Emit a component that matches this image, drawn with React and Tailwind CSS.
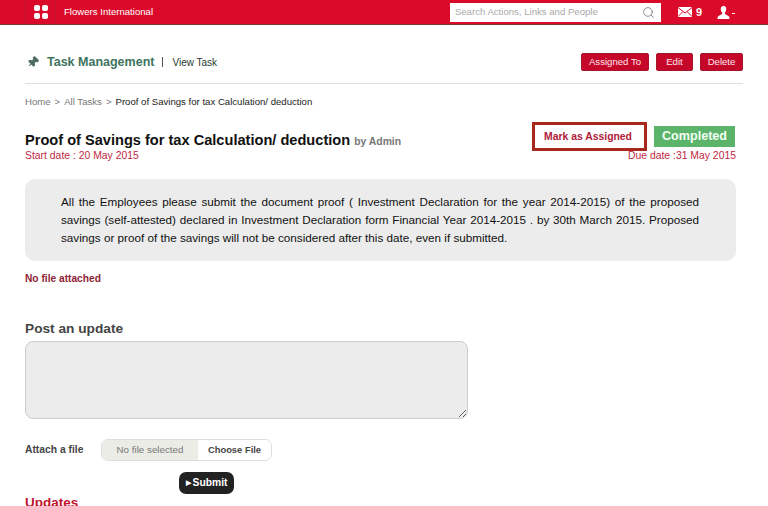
import React from 'react';
import { Pin, Search } from 'lucide-react';

const GridIcon = () => (
    <div className="grid grid-cols-2 gap-[2px]">
        <span className="h-[6px] w-[6px] rounded-[2px] bg-white" />
        <span className="h-[6px] w-[6px] rounded-[2px] bg-white" />
        <span className="h-[6px] w-[6px] rounded-[2px] bg-white" />
        <span className="h-[6px] w-[6px] rounded-[2px] bg-white" />
    </div>
);

const MailIcon = () => (
    <svg width="14" height="10" viewBox="0 0 14 10" aria-hidden>
        <rect width="14" height="10" fill="#fff" />
        <path d="M0 0.5 L7 6 L14 0.5 M0 9.5 L5 4.5 M14 9.5 L9 4.5" stroke="#dc0a2a" strokeWidth="1" fill="none" />
    </svg>
);

const UserIcon = () => (
    <svg width="13" height="13" viewBox="0 0 13 13" aria-hidden>
        <path d="M6.5 0 C8.5 0 9.5 1.5 9.2 3.6 C9 5.2 8.3 6.2 7.8 6.8 L8 8 C9.5 9 12 9.5 12.5 11.5 L12.5 13 L0.5 13 L0.5 11.5 C1 9.5 3.5 9 5 8 L5.2 6.8 C4.7 6.2 4 5.2 3.8 3.6 C3.5 1.5 4.5 0 6.5 0 Z" fill="#fff" />
    </svg>
);

const Header = () => (
    <header className="flex h-[25px] items-center border-b border-[#7a3b2e] bg-[#dc0a2a] pl-[25px] pr-[33px]">
        <div className="flex h-full w-[31px] items-center justify-center border-x border-[#c2182f]">
            <GridIcon />
        </div>
        <span className="ml-2 text-[9.6px] text-white">Flowers International</span>
        <div className="ml-auto flex h-[19px] w-[211px] items-center justify-between bg-white pl-[5px] pr-[6px]">
            <span className="text-[9.6px] text-[#a9a9a9]">Search Actions, Links and People</span>
            <Search size={13} strokeWidth={1.5} className="text-[#777]" />
        </div>
        <div className="ml-[17px] flex items-center gap-[4px]">
            <MailIcon />
            <span className="text-[11px] font-bold text-white">9</span>
        </div>
        <div className="ml-[15px] flex items-center gap-[2px]">
            <UserIcon />
            <span className="mt-[3px] h-px w-[3px] bg-white" />
        </div>
    </header>
);

const ActionButton = ({ label, className }) => (
    <button type="button" className={`h-[18px] rounded-[2px] border border-[#a5142a] bg-[#c5082a] text-[9.6px] leading-none text-[#fde4ea] ${className}`}>
        {label}
    </button>
);

const TitleBar = () => (
    <div className="mt-[28px] flex h-[31px] items-start justify-between border-b border-[#dedede]">
        <div className="flex h-[18px] items-center">
            <Pin size={12} strokeWidth={2} className="ml-[2px] rotate-45 fill-current text-[#4f6b60]" />
            <span className="ml-[8px] text-[12.5px] font-bold text-[#3e7460]">Task Management</span>
            <span className="ml-[8px] h-[10px] w-px bg-[#555]" />
            <span className="ml-[9px] text-[10px] text-[#1f3a30]">View Task</span>
        </div>
        <div className="flex gap-[7px]">
            <ActionButton label="Assigned To" className="w-[68px]" />
            <ActionButton label="Edit" className="w-[37px]" />
            <ActionButton label="Delete" className="w-[43px]" />
        </div>
    </div>
);

const TaskHead = () => (
    <div className="mr-[7px] mt-[14px] flex items-start justify-between">
        <div className="pt-[9px]">
            <div className="flex items-baseline">
                <h1 className="text-[14.6px] font-bold leading-[19px] text-[#111]">Proof of Savings for tax Calculation/ deduction</h1>
                <span className="ml-[4px] text-[10.4px] font-bold text-[#777]">by Admin</span>
            </div>
            <p className="text-[10.4px] leading-[11px] text-[#c0283f]">Start date : 20 May 2015</p>
        </div>
        <div className="flex flex-col items-end">
            <div className="flex items-center gap-[7px] pr-px">
                <button type="button" className="h-[29px] w-[115px] border-[3px] border-[#a8281e] bg-white pr-[3px] text-[10.4px] font-bold text-[#b0213a]">
                    Mark as Assigned
                </button>
                <span className="flex h-[21px] w-[81px] items-center justify-center bg-[#5cb36a] text-[12.6px] font-bold text-[#f2fff4]">
                    Completed
                </span>
            </div>
            <p className="-mt-px text-[10.4px] leading-[11px] text-[#c0283f]">Due date :31 May 2015</p>
        </div>
    </div>
);

const PostForm = () => (
    <form className="mt-[35px]">
        <h2 className="text-[13.7px] font-bold leading-[18px] text-[#444]">Post an update</h2>
        <textarea
            aria-label="Post an update"
            className="mt-[3px] block h-[78px] w-[443px] rounded-[8px] border border-[#ccc] bg-[#ececec]"
        />
        <div className="mt-[20px] flex items-center">
            <span className="w-[76px] text-[10.3px] font-bold text-[#444]">Attach a file</span>
            <div className="flex h-[22px] w-[171px] overflow-hidden rounded-[7px] border border-[#ddd]">
                <span className="flex w-[96px] items-center justify-center bg-[#ecece6] text-[9.8px] text-[#777]">No file selected</span>
                <span className="flex flex-1 items-center justify-center bg-white text-[9.4px] font-bold text-[#444]">Choose File</span>
            </div>
        </div>
        <button
            type="button"
            className="ml-[154px] mt-[11px] flex h-[22px] w-[55px] items-center justify-center gap-[2px] rounded-[7px] bg-[#222] text-[10.3px] font-bold text-white"
        >
            <span className="text-[7px]">▶</span>Submit
        </button>
    </form>
);

export default function App() {
    return (
        <div className="h-[506px] overflow-hidden bg-white font-['Liberation_Sans',Arial,sans-serif]">
            <Header />
            <main className="pl-[25px] pr-[25px]">
                <TitleBar />
                <nav className="mt-[11px] flex gap-[4px] text-[9.6px] leading-[13px] text-[#777]">
                    <span>Home</span>
                    <span>&gt;</span>
                    <span>All Tasks</span>
                    <span>&gt;</span>
                    <span className="text-[#222]">Proof of Savings for tax Calculation/ deduction</span>
                </nav>
                <TaskHead />
                <section className="mr-[7px] mt-[18px] rounded-[10px] bg-[#ececec] py-[14px] pl-[36px] pr-[37px]">
                    <p className="text-justify text-[11.7px] leading-[18px] text-[#111]">
                        All the Employees please submit the document proof ( Investment Declaration for the year 2014-2015) of the proposed savings (self-attested) declared in Investment Declaration form Financial Year 2014-2015 . by 30th March 2015. Proposed savings or proof of the savings will not be considered after this date, even if submitted.
                    </p>
                </section>
                <p className="mt-[11px] text-[10.2px] font-bold leading-[13px] text-[#8e2436]">No file attached</p>
                <PostForm />
                <h2 className="text-[13.5px] font-bold leading-[18px] text-[#c0142f]">Updates</h2>
            </main>
        </div>
    );
}
